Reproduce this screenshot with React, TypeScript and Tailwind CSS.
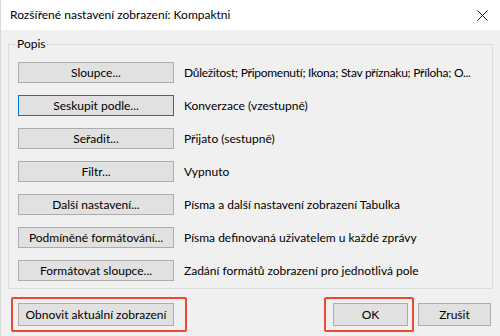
import React from "react";

const rows: { label: string; desc: string; focused?: boolean; tight?: boolean }[] = [
  { label: "Sloupce...", desc: "Důležitost; Připomenutí; Ikona; Stav příznaku; Příloha; O...", tight: true },
  { label: "Seskupit podle...", desc: "Konverzace (vzestupně)", focused: true },
  { label: "Seřadit...", desc: "Přijato (sestupně)" },
  { label: "Filtr...", desc: "Vypnuto" },
  { label: "Další nastavení...", desc: "Písma a další nastavení zobrazení Tabulka" },
  { label: "Podmíněné formátování...", desc: "Písma definovaná uživatelem u každé zprávy" },
  { label: "Formátovat sloupce...", desc: "Zadání formátů zobrazení pro jednotlivá pole" },
];

export default function App() {
  return (
    <div className="relative w-[500px] h-[336px] overflow-hidden bg-[#f0f0f0] text-[12px] text-black border-l border-[#d9d9d9] font-['Lato','Noto_Sans',sans-serif]">
      {/* Title bar */}
      <div className="h-[30px] bg-white flex items-center justify-between pl-[9px] pr-[12px]">
        <span className="text-[12px] leading-none">Rozšířené nastavení zobrazení: Kompaktni</span>
        <svg width="11" height="11" viewBox="0 0 11 11">
          <path d="M0.5 0.5 L10.5 10.5 M10.5 0.5 L0.5 10.5" stroke="#1a1a1a" strokeWidth="1" />
        </svg>
      </div>

      {/* Body */}
      <div className="px-[7px]">
        <div className="relative mt-[14px] h-[245px] border border-[#dcdcdc] pl-[9px] pt-[17px]">
          <span className="absolute -top-[9px] left-[7px] bg-[#f0f0f0] px-[1px] leading-[16px]">Popis</span>
          <div className="flex flex-col gap-[12px]">
            {rows.map((r) => (
              <div key={r.label} className="flex items-center h-[21px]">
                <div
                  className={
                    r.focused
                      ? "w-[156px] h-[21px] flex items-center justify-center bg-[#e1e1e1] border border-[#0078d7]"
                      : "w-[156px] h-[21px] flex items-center justify-center bg-[#e1e1e1] border border-[#adadad]"
                  }
                >
                  <span className="leading-none">{r.label}</span>
                </div>
                <span
                  className={
                    r.tight
                      ? "ml-[10px] leading-none whitespace-nowrap tracking-[-0.27px]"
                      : "ml-[10px] leading-none whitespace-nowrap"
                  }
                >
                  {r.desc}
                </span>
              </div>
            ))}
          </div>
        </div>

        {/* Bottom buttons */}
        <div className="relative flex items-center mt-[14px] pl-[10px]">
          <div className="w-[156px] h-[23px] flex items-center justify-center bg-[#e1e1e1] border border-[#adadad]">
            <span className="leading-none">Obnovit aktuální zobrazení</span>
          </div>
          <div className="ml-auto flex gap-[10px] pr-[2px]">
            <div className="w-[75px] h-[23px] flex items-center justify-center bg-[#e1e1e1] border border-[#adadad]">
              <span className="leading-none">OK</span>
            </div>
            <div className="w-[73px] h-[23px] flex items-center justify-center bg-[#e1e1e1] border border-[#adadad]">
              <span className="leading-none">Zrušit</span>
            </div>
          </div>
        </div>
      </div>

      {/* Annotation highlight boxes */}
      <div className="absolute left-[10px] top-[297px] w-[176px] h-[35px] border-2 border-[#ea4a2f] rounded-[2px]" />
      <div className="absolute left-[323px] top-[297px] w-[90px] h-[35px] border-2 border-[#ea4a2f] rounded-[2px]" />
    </div>
  );
}
